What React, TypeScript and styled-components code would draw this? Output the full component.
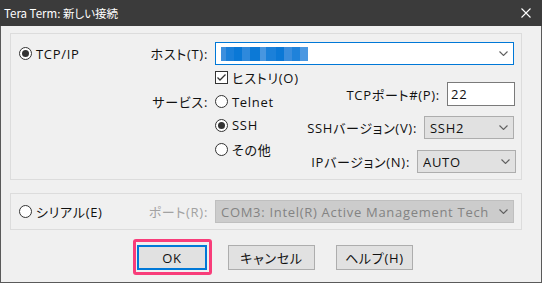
import styled, { createGlobalStyle } from "styled-components";

const GlobalStyle = createGlobalStyle`
  html, body {
    margin: 0;
    padding: 0;
    background: #f0f0f0;
  }
  * {
    box-sizing: border-box;
  }
`;

const Window = styled.div`
  width: 542px;
  height: 283px;
  display: flex;
  flex-direction: column;
  background: #f0f0f0;
  border: 1px solid #5a5a5a;
  border-top: none;
  font-family: "Open Sans", "Noto Sans CJK JP", sans-serif;
  font-size: 13px;
  letter-spacing: 0.7px;
  font-feature-settings: "palt";
  color: #111;
`;

const TitleBar = styled.div`
  height: 26px;
  margin: 0 -1px;
  padding: 0 11px 0 4px;
  display: flex;
  align-items: center;
  justify-content: space-between;
  background: #3b3b3b;
  color: #fff;
  font-family: "Noto Sans CJK JP", sans-serif;
  font-size: 11.5px;
  letter-spacing: 0;
`;

const CloseIcon = styled.svg`
  width: 10px;
  height: 10px;
  display: block;
`;

const Body = styled.div`
  flex: 1;
  display: flex;
  flex-direction: column;
  padding: 7px 19px 0 9px;
`;

const Group = styled.div<{ $rows: string; $pad: string; $gapTop?: number }>`
  border: 1px solid #dcdcdc;
  display: grid;
  grid-template-columns: 121px 75px 75px 1fr;
  grid-template-rows: ${(p) => p.$rows};
  padding: ${(p) => p.$pad};
  margin-top: ${(p) => p.$gapTop ?? 0}px;
`;

const Cell = styled.div<{ $col: string; $row?: string }>`
  grid-column: ${(p) => p.$col};
  grid-row: ${(p) => p.$row ?? "auto"};
  display: flex;
  align-items: center;
  white-space: nowrap;
  min-width: 0;
`;

const FieldLabel = styled(Cell)<{ $disabled?: boolean }>`
  justify-content: flex-end;
  padding-right: 7px;
  color: ${(p) => (p.$disabled ? "#a2a2a2" : "inherit")};
`;

const Option = styled.label`
  display: inline-flex;
  align-items: center;
  gap: 4px;
  white-space: nowrap;
`;

const Radio = styled.span<{ $checked?: boolean }>`
  width: 13px;
  height: 13px;
  border: 1px solid #333;
  border-radius: 50%;
  background: #fff;
  display: inline-flex;
  align-items: center;
  justify-content: center;
  flex: none;

  &::after {
    content: "";
    width: 7px;
    height: 7px;
    border-radius: 50%;
    background: ${(p) => (p.$checked ? "#333" : "transparent")};
  }
`;

const CheckBox = styled.span`
  width: 13px;
  height: 13px;
  border: 1px solid #333;
  background: #fff;
  display: inline-flex;
  align-items: center;
  justify-content: center;
  flex: none;
`;

const Combo = styled.div<{ $width?: number; $focused?: boolean; $disabled?: boolean; $right?: number }>`
  width: ${(p) => (p.$width ? `${p.$width}px` : "100%")};
  height: 23px;
  margin-right: ${(p) => p.$right ?? 0}px;
  display: flex;
  align-items: center;
  padding: 0 5px;
  border: 1px solid
    ${(p) => (p.$focused ? "#0078d7" : p.$disabled ? "#bfbfbf" : "#adadad")};
  background: ${(p) => (p.$focused ? "#fff" : p.$disabled ? "#cccccc" : "#e1e1e1")};
  color: ${(p) => (p.$disabled ? "#838383" : "inherit")};
  overflow: hidden;
  white-space: nowrap;
`;

const ComboText = styled.span`
  flex: 1;
  overflow: hidden;
`;

const Chevron = styled.svg`
  width: 9px;
  height: 5px;
  flex: none;
  margin-left: 4px;
`;

const Blurred = styled.span`
  display: block;
  width: 88px;
  height: 14px;
  margin-left: -1px;
  background: linear-gradient(
    90deg,
    #3d8fdd 0 6px,
    #1a7fd9 6px 14px,
    #0a78d6 14px 22px,
    #2e89dc 22px 30px,
    #0c79d6 30px 40px,
    #4896e0 40px 46px,
    #1b80d9 46px 56px,
    #0b78d6 56px 64px,
    #3a8ddd 64px 72px,
    #1f82da 72px 80px,
    #4b98e1 80px 88px
  );
`;

const PortInput = styled.div`
  width: 68px;
  height: 24px;
  margin-right: -1px;
  border: 1px solid #7a7a7a;
  background: #fff;
  padding-left: 3px;
  display: flex;
  align-items: center;
`;

const Fields = styled.div`
  grid-column: 4;
  grid-row: 2 / 7;
  display: flex;
  flex-direction: column;
  align-items: flex-end;
  padding-top: 17px;
`;

const FieldRow = styled.div<{ $top?: number }>`
  display: flex;
  align-items: center;
  gap: 7px;
  margin-top: ${(p) => p.$top ?? 0}px;
  white-space: nowrap;
`;

const ButtonRow = styled.div`
  display: flex;
  align-items: center;
  gap: 21px;
  margin-top: 15px;
  padding-left: 127px;
`;

const Button = styled.button<{ $width: number; $default?: boolean }>`
  width: ${(p) => p.$width}px;
  height: 25px;
  padding: 0;
  background: #e1e1e1;
  border: ${(p) => (p.$default ? "2px solid #0078d7" : "1px solid #adadad")};
  font: inherit;
  letter-spacing: inherit;
  font-feature-settings: inherit;
  color: inherit;
`;

const FocusMark = styled.span`
  position: relative;
  display: inline-flex;

  &::after {
    content: "";
    position: absolute;
    top: -6px;
    left: -4px;
    right: -5px;
    bottom: -5px;
    border: 3px solid #f83d7a;
    border-radius: 3px;
    pointer-events: none;
  }
`;

const ChevronIcon = () => (
  <Chevron viewBox="0 0 9 5">
    <polyline points="0.5,0.5 4.5,4.5 8.5,0.5" fill="none" stroke="#606060" strokeWidth="1.1" />
  </Chevron>
);

const App = () => {
  return (
    <>
      <GlobalStyle />
      <Window>
        <TitleBar>
          <span>Tera Term: 新しい接続</span>
          <CloseIcon viewBox="0 0 10 10">
            <path d="M0.5 0.5 L9.5 9.5 M9.5 0.5 L0.5 9.5" stroke="#fff" strokeWidth="1.1" />
          </CloseIcon>
        </TitleBar>
        <Body>
          <Group $rows="23px 25px 23px 24px 24px 13px" $pad="8px 7px 5px 8px">
            <Cell $col="1" $row="1">
              <Option>
                <Radio $checked />
                TCP/IP
              </Option>
            </Cell>
            <FieldLabel $col="2" $row="1">ホスト(T):</FieldLabel>
            <Cell $col="3 / 5" $row="1">
              <Combo $focused>
                <ComboText>
                  <Blurred />
                </ComboText>
                <ChevronIcon />
              </Combo>
            </Cell>
            <Cell $col="3" $row="2">
              <Option>
                <CheckBox>
                  <svg width="11" height="11" viewBox="0 0 11 11">
                    <polyline points="1.5,5.5 4,8 9.5,2.5" fill="none" stroke="#333" strokeWidth="1.3" />
                  </svg>
                </CheckBox>
                ヒストリ(O)
              </Option>
            </Cell>
            <FieldLabel $col="2" $row="3">サービス:</FieldLabel>
            <Cell $col="3" $row="3">
              <Option>
                <Radio />
                Telnet
              </Option>
            </Cell>
            <Cell $col="3" $row="4">
              <Option>
                <Radio $checked />
                SSH
              </Option>
            </Cell>
            <Cell $col="3" $row="5">
              <Option>
                <Radio />
                その他
              </Option>
            </Cell>
            <Fields>
              <FieldRow>
                TCPポート#(P):
                <PortInput>22</PortInput>
              </FieldRow>
              <FieldRow $top={10}>
                SSHバージョン(V):
                <Combo $width={90}>
                  <ComboText>SSH2</ComboText>
                  <ChevronIcon />
                </Combo>
              </FieldRow>
              <FieldRow $top={11}>
                IPバージョン(N):
                <Combo $width={99} $right={-2}>
                  <ComboText>AUTO</ComboText>
                  <ChevronIcon />
                </Combo>
              </FieldRow>
            </Fields>
          </Group>

          <Group $rows="23px" $pad="6px 7px 6px 8px" $gapTop={13}>
            <Cell $col="1">
              <Option>
                <Radio />
                シリアル(E)
              </Option>
            </Cell>
            <FieldLabel $col="2" $disabled>
              ポート(R):
            </FieldLabel>
            <Cell $col="3 / 5">
              <Combo $disabled>
                <ComboText>COM3: Intel(R) Active Management Tech</ComboText>
                <ChevronIcon />
              </Combo>
            </Cell>
          </Group>

          <ButtonRow>
            <FocusMark>
              <Button $width={70} $default>
                OK
              </Button>
            </FocusMark>
            <Button $width={87}>キャンセル</Button>
            <Button $width={77}>ヘルプ(H)</Button>
          </ButtonRow>
        </Body>
      </Window>
    </>
  );
};

export default App;
